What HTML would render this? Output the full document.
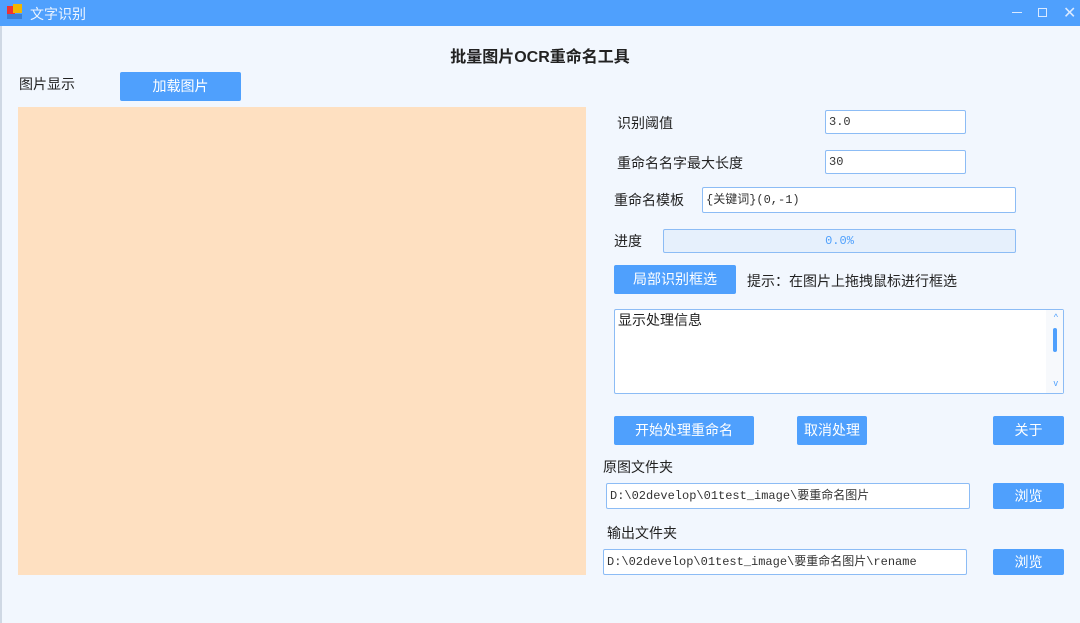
<!DOCTYPE html>
<html><head><meta charset="utf-8"><style>
*{margin:0;padding:0;box-sizing:border-box}
body{width:1080px;height:623px;background:#f2f7fe;font-family:"Liberation Sans","Noto Sans CJK SC",sans-serif;font-size:14px;color:#222;position:relative;overflow:hidden}
.a{position:absolute}
.tb{left:0;top:0;width:1080px;height:26px;background:#4fa0fd;color:#fff}
.btn{position:absolute;background:#4fa0fd;color:#fff;border-radius:2px;text-align:center;font-size:14px}
.in{position:absolute;background:#fff;border:1px solid #8cbcf5;border-radius:2px;font-size:12px;padding-left:3px;font-family:"Liberation Mono","Noto Sans CJK SC",monospace;color:#333}
.lb{position:absolute;font-size:14px;color:#222}
</style></head><body>
<div class="a tb">
 <div class="a" style="left:7px;top:6px;width:8px;height:8px;background:#e33"></div>
 <div class="a" style="left:13px;top:4px;width:9px;height:9px;background:#f2b600"></div>
 <div class="a" style="left:7px;top:14px;width:15px;height:5px;background:#3a7fd6"></div>
 <div class="a" style="left:30px;top:4px;font-size:14px;color:#eef5ff">文字识别</div>
 <div class="a" style="left:1012px;top:12px;width:10px;height:1px;background:#dbeaff"></div>
 <div class="a" style="left:1038px;top:8px;width:9px;height:9px;border:1px solid #dbeaff"></div>
 <div class="a" style="left:1063px;top:3px;color:#dbeaff;font-size:16px">✕</div>
</div>
<div class="a" style="left:0;top:26px;width:2px;height:597px;background:#cfd8e4"></div>
<div class="a" style="left:0;top:43px;width:1080px;text-align:center;font-size:16px;font-weight:bold;color:#222">批量图片OCR重命名工具</div>
<div class="lb" style="left:19px;top:74px">图片显示</div>
<div class="btn" style="left:120px;top:72px;width:121px;height:29px;line-height:29px">加载图片</div>
<div class="a" style="left:18px;top:107px;width:568px;height:468px;background:#fee0c1"></div>

<div class="lb" style="left:617px;top:113px">识别阈值</div>
<div class="in" style="left:825px;top:110px;width:141px;height:24px;line-height:22px">3.0</div>
<div class="lb" style="left:617px;top:153px">重命名名字最大长度</div>
<div class="in" style="left:825px;top:150px;width:141px;height:24px;line-height:22px">30</div>
<div class="lb" style="left:614px;top:190px">重命名模板</div>
<div class="in" style="left:702px;top:187px;width:314px;height:26px;line-height:24px">{关键词}(0,-1)</div>
<div class="lb" style="left:614px;top:231px">进度</div>
<div class="a" style="left:663px;top:229px;width:353px;height:24px;background:#e6f0fc;border:1px solid #8cbcf5;border-radius:2px;text-align:center;line-height:22px;font-size:12px;color:#4fa0fd;font-family:'Liberation Mono',monospace">0.0%</div>
<div class="btn" style="left:614px;top:265px;width:122px;height:29px;line-height:29px">局部识别框选</div>
<div class="lb" style="left:747px;top:271px">提示：在图片上拖拽鼠标进行框选</div>
<div class="a" style="left:614px;top:309px;width:450px;height:85px;background:#fff;border:1px solid #8cbcf5;border-radius:2px">
 <div class="a" style="left:3px;top:0px;font-size:14px">显示处理信息</div>
 <div class="a" style="right:0;top:0;width:17px;height:83px;background:#f7f9fc"></div>
 <div class="a" style="right:6px;top:18px;width:4px;height:24px;background:#4fa0fd;border-radius:2px"></div>
 <div class="a" style="right:5px;top:2px;font-size:9px;color:#4fa0fd">^</div>
 <div class="a" style="right:5px;top:68px;font-size:9px;color:#4fa0fd">v</div>
</div>
<div class="btn" style="left:614px;top:416px;width:140px;height:29px;line-height:29px">开始处理重命名</div>
<div class="btn" style="left:797px;top:416px;width:70px;height:29px;line-height:29px">取消处理</div>
<div class="btn" style="left:993px;top:416px;width:71px;height:29px;line-height:29px">关于</div>
<div class="lb" style="left:603px;top:457px">原图文件夹</div>
<div class="in" style="left:606px;top:483px;width:364px;height:26px;line-height:24px">D:\02develop\01test_image\要重命名图片</div>
<div class="btn" style="left:993px;top:483px;width:71px;height:26px;line-height:26px">浏览</div>
<div class="lb" style="left:607px;top:523px">输出文件夹</div>
<div class="in" style="left:603px;top:549px;width:364px;height:26px;line-height:24px">D:\02develop\01test_image\要重命名图片\rename</div>
<div class="btn" style="left:993px;top:549px;width:71px;height:26px;line-height:26px">浏览</div>
</body></html>
